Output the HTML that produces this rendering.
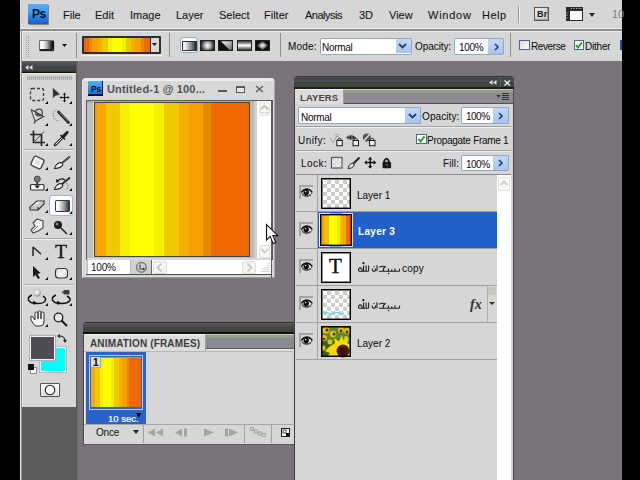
<!DOCTYPE html>
<html><head><meta charset="utf-8">
<style>
*{margin:0;padding:0;box-sizing:border-box}
html,body{width:640px;height:480px;overflow:hidden;background:#7a737b;font-family:"Liberation Sans",sans-serif;position:relative}
.a{position:absolute}
.t{position:absolute;white-space:nowrap;line-height:1}
.mt{position:absolute;top:9px;font-size:11px;color:#161616;white-space:nowrap;line-height:normal;-webkit-text-stroke:0.1px #161616}
.ob{font-size:10px;color:#101010;-webkit-text-stroke:0.05px #101010}
svg{position:absolute;overflow:visible}
</style></head><body>
<!-- ===== black strips ===== -->
<div class="a" style="left:0;top:0;width:20px;height:480px;background:#000"></div>
<div class="a" style="left:622px;top:0;width:18px;height:480px;background:#000"></div>

<!-- ===== menubar ===== -->
<div class="a" style="left:20px;top:0;width:602px;height:28px;background:#d6d6d6"></div>
<div class="a" style="left:20px;top:28px;width:602px;height:1px;background:#eeeeee"></div>
<div class="a" style="left:20px;top:29px;width:602px;height:2px;background:#8a9088"></div>
<!-- Ps logo -->
<div class="a" style="left:28px;top:4px;width:20px;height:20px;background:linear-gradient(180deg,#54b0fa 0,#3c9cf4 45%,#2a86ec 60%,#1e70da 80%,#1a62c8 100%);box-shadow:1px 1px 0 #8a8070"></div>
<div class="t" style="left:32px;top:8px;font-size:12px;font-weight:bold;color:#0a1018;letter-spacing:-0.6px">Ps</div>

<div class="mt" style="left:63px">File</div>
<div class="mt" style="left:95px">Edit</div>
<div class="mt" style="left:130px">Image</div>
<div class="mt" style="left:176px">Layer</div>
<div class="mt" style="left:219px">Select</div>
<div class="mt" style="left:264px">Filter</div>
<div class="mt" style="left:305px;letter-spacing:-0.5px">Analysis</div>
<div class="mt" style="left:359px">3D</div>
<div class="mt" style="left:389px">View</div>
<div class="mt" style="left:428px;letter-spacing:0.75px">Window</div>
<div class="mt" style="left:482px;letter-spacing:0.5px">Help</div>
<div class="a" style="left:518px;top:6px;width:1px;height:17px;background:#9a9a9a"></div>
<div class="a" style="left:519px;top:6px;width:1px;height:17px;background:#f0f0f0"></div>
<!-- Br -->
<div class="a" style="left:534px;top:7px;width:15px;height:14px;background:linear-gradient(135deg,#ececec,#c4c4bc);border:1px solid #585858;box-shadow:inset -1px -1px 0 #a0a0a0"></div>
<div class="t" style="left:537px;top:10px;font-size:9px;font-weight:bold;color:#1a1a1a;letter-spacing:0.2px">Br</div>
<!-- screen mode icon -->
<svg style="left:566px;top:7px" width="18" height="14"><rect x="0" y="0" width="17" height="14" fill="#2a2a2a"/><rect x="4" y="4" width="12" height="9" fill="#fafafa"/><path d="M5 1.5H6M7.5 1.5H8.5M10 1.5H11M12.5 1.5H13.5M14.5 1.5H15.5M1 5.5V6.5M1 8V9M1 10.5V11.5" stroke="#bbb" stroke-width="1"/></svg>
<svg style="left:589px;top:13px" width="7" height="5"><path d="M0 0H6L3 4Z" fill="#202020"/></svg>
<div class="t" style="left:612px;top:9px;font-size:11px;color:#808080">10</div>

<!-- ===== options bar ===== -->
<div class="a" style="left:21px;top:31px;width:601px;height:30px;background:#d6d6d6;border-left:1px solid #8e8e8e"></div>
<div class="a" style="left:22px;top:31px;width:600px;height:1px;background:#eaeaea"></div>
<div class="a" style="left:22px;top:31px;width:1px;height:30px;background:#eaeaea"></div>

<!-- grip -->
<div class="a" style="left:26px;top:35px;width:3px;height:22px;background-image:repeating-linear-gradient(180deg,#d6d6d6 0 1px,transparent 1px 2px),repeating-linear-gradient(90deg,#a4a4a4 0 1px,transparent 1px 2px)"></div>
<!-- gradient tool icon -->
<div class="a" style="left:39px;top:40px;width:15px;height:11px;border-radius:1.5px;background:linear-gradient(90deg,#f4f4f4 0,#fff 25%,#a8a8a8 60%,#1a1a1a 100%);border:1px solid #6a6a6a;border-right:2px solid #111;border-bottom:2px solid #222;box-shadow:1px 1px 0 #b8b8b8"></div>
<svg style="left:62px;top:44px" width="6" height="4"><path d="M0 0H5L2.5 3Z" fill="#101010"/></svg>
<div class="a" style="left:76px;top:33px;width:1px;height:25px;background:#8c9288"></div>
<!-- gradient picker -->
<div class="a" style="left:82px;top:36px;width:79px;height:18px;background:#d8d8d8;border:2px solid #2e2e2e;border-bottom-width:2px;border-radius:1px"></div>
<div class="a" style="left:84px;top:38px;width:66px;height:14px;background:linear-gradient(90deg,#f06800 0 5px,#e88800 5px 8px,#f8a000 8px 14px,#f8b000 14px 18px,#f0c800 18px 24px,#f4f000 24px 28px,#ffff00 28px 38px,#f4f000 38px 42px,#f0c800 42px 47px,#f8b000 47px 51px,#f8a000 51px 57px,#e88800 57px 60px,#f06800 60px)"></div>
<div class="a" style="left:150px;top:38px;width:1px;height:14px;background:#2e2e2e"></div>
<svg style="left:152px;top:43px" width="6" height="4"><path d="M0 0H5L2.5 3Z" fill="#101010"/></svg>
<div class="a" style="left:82px;top:55px;width:80px;height:1px;background:#f4f4f4"></div>
<div class="a" style="left:169px;top:33px;width:1px;height:24px;background:#8c9288"></div>
<!-- gradient type buttons -->
<div class="a" style="left:180px;top:37px;width:18px;height:16px;border:1px solid #8cb0d0;border-radius:3px;background:#fbfbfb"></div>
<div class="a" style="left:182px;top:41px;width:15px;height:10px;background:linear-gradient(90deg,#fff 0,#f0f0f0 20%,#909090 60%,#101010 100%);box-shadow:inset 0 0 0 1px #303030"></div>
<div class="a" style="left:200px;top:40px;width:15px;height:11px;background:radial-gradient(circle at 50% 50%,#fff 0,#c8c8c8 25%,#606060 55%,#101010 80%);box-shadow:inset 0 0 0 1px #202020"></div>
<svg style="left:218px;top:40px" width="15" height="11"><defs><linearGradient id="ag" x1="0" y1="0" x2="1" y2="1"><stop offset="0" stop-color="#fff"/><stop offset="1" stop-color="#707070"/></linearGradient></defs><rect x="0" y="0" width="15" height="11" fill="#141414"/><path d="M3 1.2H13.8V9.8H11.5Z" fill="url(#ag)"/><path d="M1.2 1.2H3L9 9.8H1.2Z" fill="#101010"/><rect x="0.5" y="0.5" width="14" height="10" fill="none" stroke="#202020"/></svg>
<div class="a" style="left:237px;top:40px;width:15px;height:11px;background:linear-gradient(180deg,#101010 0,#808080 25%,#fff 50%,#808080 75%,#101010 100%);box-shadow:inset 0 0 0 1px #202020"></div>
<div class="a" style="left:255px;top:40px;width:15px;height:11px;background:#101010;box-shadow:inset 0 0 0 1px #202020"></div>
<svg style="left:255px;top:40px" width="15" height="11"><defs><radialGradient id="dg"><stop offset="0" stop-color="#fff"/><stop offset="1" stop-color="#303030"/></radialGradient></defs><path d="M7.5 1L13 5.5L7.5 10L2 5.5Z" fill="url(#dg)"/></svg>
<div class="a" style="left:280px;top:33px;width:1px;height:24px;background:#8c9288"></div>
<!-- Mode -->
<div class="t ob" style="left:288px;top:42px;letter-spacing:0.2px">Mode:</div>
<div class="a" style="left:320px;top:38px;width:92px;height:17px;background:#fff;border:1px solid #90a8c8;border-radius:1px"></div>
<div class="t ob" style="left:322px;top:43px;letter-spacing:-0.3px">Normal</div>
<div class="a" style="left:396px;top:39px;width:15px;height:14px;background:linear-gradient(#c4d8f4,#a8c4ec);border-radius:1px"></div>
<svg style="left:398px;top:43px" width="9" height="6"><path d="M1 1L4.5 4.5L8 1" stroke="#243c78" stroke-width="1.8" fill="none"/></svg>
<div class="t ob" style="left:415px;top:42px;letter-spacing:-0.05px">Opacity:</div>
<div class="a" style="left:454px;top:38px;width:50px;height:17px;background:#fff;border:1px solid #90a8c8;border-radius:1px"></div>
<div class="t ob" style="left:459px;top:43px;letter-spacing:-0.3px">100%</div>
<div class="a" style="left:488px;top:39px;width:15px;height:15px;background:linear-gradient(#c4d8f4,#a8c4ec)"></div>
<svg style="left:494px;top:43px" width="5" height="8"><path d="M1 1L4 4L1 7" stroke="#243c78" stroke-width="1.6" fill="none"/></svg>
<div class="a" style="left:510px;top:33px;width:1px;height:24px;background:#8c9288"></div>
<!-- checkboxes -->
<div class="a" style="left:519px;top:40px;width:11px;height:10px;background:linear-gradient(135deg,#d8d8d8,#fff);border:1px solid #4a6890"></div>
<div class="t ob" style="left:531px;top:42px;letter-spacing:-0.4px">Reverse</div>
<div class="a" style="left:574px;top:40px;width:10px;height:10px;background:#fff;border:1px solid #4a6890"></div>
<svg style="left:575px;top:41px" width="8" height="8"><path d="M1 4L3 6.5L7 1.5" stroke="#20a020" stroke-width="2" fill="none"/></svg>
<div class="t ob" style="left:585px;top:42px;letter-spacing:-0.2px">Dither</div>
<div class="a" style="left:620px;top:40px;width:2px;height:10px;background:#2050a0"></div>

<!-- ===== workspace frame pieces ===== -->
<div class="a" style="left:20px;top:31px;width:1px;height:449px;background:#ececec"></div>
<div class="a" style="left:21px;top:61px;width:1px;height:419px;background:#8a8a96"></div>

<!-- ===== toolbox ===== -->
<div class="a" style="left:22px;top:60px;width:54px;height:14px;background:linear-gradient(180deg,#e4e4e4 0 1px,#5a5a5a 1px 3px,#505058 3px 4px,#4a4a58 4px 6px,#40463e 6px 11px,#303430 11px 12px,#101010 12px 13px,#e0e0e0 13px)"></div>
<svg style="left:25px;top:65px" width="8" height="5"><path d="M0 2.5L3.5 0V5Z M4 2.5L7.5 0V5Z" fill="#d8d8d8"/></svg>
<div class="a" style="left:22px;top:73px;width:54px;height:334px;background:#d6d6d6;border-left:1px solid #eaeaea;border-top:1px solid #eaeaea"></div>
<div class="a" style="left:27px;top:76px;width:45px;height:4px;background:repeating-linear-gradient(90deg,#a4a4a4 0 1px,#c8c8c8 1px 2px);opacity:.85"></div>
<div class="a" style="left:22px;top:407px;width:54px;height:73px;background:#5c5c5c"></div>
<div class="a" style="left:76px;top:61px;width:1px;height:419px;background:#5c5c5c"></div>
<div class="a" style="left:77px;top:61px;width:1px;height:419px;background:#6e6a70"></div>
<!-- separators -->
<div class="a" style="left:24px;top:149px;width:50px;height:1px;background:#a8aaa0"></div>
<div class="a" style="left:24px;top:150px;width:50px;height:1px;background:#f0f0f0"></div>
<div class="a" style="left:24px;top:238px;width:50px;height:1px;background:#a8aaa0"></div>
<div class="a" style="left:24px;top:239px;width:50px;height:1px;background:#f0f0f0"></div>
<div class="a" style="left:24px;top:284px;width:50px;height:1px;background:#a8aaa0"></div>
<div class="a" style="left:24px;top:285px;width:50px;height:1px;background:#f0f0f0"></div>
<!-- selected gradient tool bg -->
<div class="a" style="left:49px;top:195px;width:24px;height:21px;background:#fdfdfd;border:1px solid #98b8d8;border-radius:3px"></div>

<svg style="left:0;top:0" width="640" height="480">
<g fill="#111">
<!-- small corner triangles -->
<path d="M45 104H48V101Z"/><path d="M69 104H72V101Z"/>
<path d="M45 126H48V123Z"/><path d="M69 126H72V123Z"/>
<path d="M45 146H48V143Z"/><path d="M69 146H72V143Z"/>
<path d="M45 170H48V167Z"/><path d="M69 170H72V167Z"/>
<path d="M45 191H48V188Z"/><path d="M69 191H72V188Z"/>
<path d="M45 213H48V210Z"/><path d="M69 214H72V211Z"/>
<path d="M45 235H48V232Z"/><path d="M69 235H72V232Z"/>
<path d="M45 260H48V257Z"/><path d="M69 260H72V257Z"/>
<path d="M45 280H48V277Z"/><path d="M69 280H72V277Z"/>
<path d="M45 306H48V303Z"/><path d="M69 306H72V303Z"/>
<path d="M45 327H48V324Z"/>
</g>
<!-- marquee -->
<rect x="30.5" y="88.5" width="13" height="12" fill="none" stroke="#3a3a3a" stroke-width="1.3" stroke-dasharray="3 2" rx="1.5"/>
<!-- move -->
<path d="M53 88L53 98L55.5 95.5L60 94.5Z" fill="#2a2a2a" stroke="#777" stroke-width="0.6"/>
<path d="M60.5 97.5H68.5M64.5 93.5V101.5" stroke="#111" stroke-width="1.2"/>
<path d="M63 94.5L64.5 92.5L66 94.5Z M63 100.5L64.5 102.5L66 100.5Z M61.5 96L59.5 97.5L61.5 99Z M67.5 96L69.5 97.5L67.5 99Z" fill="#111"/>
<!-- lasso -->
<path d="M31 109.5L43.5 116.5L35.5 121" fill="none" stroke="#3a3a3a" stroke-width="1.3"/>
<path d="M31 109.5L35 121" fill="none" stroke="#555" stroke-width="1.1"/>
<circle cx="39" cy="112.5" r="3.4" fill="none" stroke="#444" stroke-width="1.2"/>
<circle cx="38" cy="114" r="1" fill="#222"/>
<path d="M35.5 121L34 123.5" stroke="#333" stroke-width="1.3"/>
<!-- quick selection -->
<path d="M56.5 109.5Q52.5 112 53.5 117Q55 121 58.5 120.5" fill="none" stroke="#666" stroke-width="1" stroke-dasharray="1.2 1.2"/>
<path d="M58.5 112L68.5 122.5" stroke="#1e1e1e" stroke-width="2.6" stroke-linecap="round"/>
<path d="M59.5 112.5L68 121.5" stroke="#aaa" stroke-width="0.7"/>
<!-- crop -->
<path d="M33.5 130.5V142.5H45M30 134.5H41.5V146" fill="none" stroke="#262626" stroke-width="1.7"/>
<path d="M35 141L44 131.5" stroke="#444" stroke-width="1"/>
<!-- eyedropper -->
<path d="M55 145L63 137" stroke="#2a2a2a" stroke-width="2.6" stroke-linecap="round"/>
<path d="M55.5 144.5L62.5 137.5" stroke="#f0f0f0" stroke-width="1"/>
<path d="M61.5 136L64.5 133L67 130.8Q69 130.8 68.5 133L66.5 135.5L63.5 138.5Z" fill="#252525"/>
<path d="M60.5 135L65 139.5" stroke="#1a1a1a" stroke-width="1.6"/>
<!-- healing -->
<rect x="32" y="157.5" width="11" height="10" rx="2" transform="rotate(25 37.5 162.5)" fill="#f8f8f8" stroke="#4a4a4a" stroke-width="1.4"/>
<rect x="35" y="160" width="5" height="5" transform="rotate(25 37.5 162.5)" fill="#e0e0e0"/>
<!-- brush -->
<path d="M70 156.5L61.5 163.5" stroke="#2a2a2a" stroke-width="2"/>
<path d="M70 156.5L61.5 163.5" stroke="#999" stroke-width="0.6"/>
<path d="M54.5 168.5Q55.5 164 60 162.5Q63.5 162.8 62.5 165.5Q59.5 168.8 54.5 168.5Z" fill="#f0f0f0" stroke="#222" stroke-width="1.1"/>
<!-- stamp -->
<circle cx="37.3" cy="179" r="3" fill="#777" stroke="#333" stroke-width="0.8"/>
<path d="M37.3 182V185" stroke="#333" stroke-width="1.8"/>
<rect x="30.5" y="184.5" width="13.5" height="5.5" rx="1" fill="#f4f4f4" stroke="#333" stroke-width="1.2"/>
<path d="M34.5 185.5H40L37.3 188.5Z" fill="#111"/>
<!-- history brush -->
<path d="M70 177.5L61.5 184.5" stroke="#2a2a2a" stroke-width="2"/>
<path d="M54.5 189.5Q55.5 185 60 183.5Q63.5 183.8 62.5 186.5Q59.5 189.8 54.5 189.5Z" fill="#f0f0f0" stroke="#222" stroke-width="1.1"/>
<path d="M58 180.5Q61.5 177.5 65 180" fill="none" stroke="#111" stroke-width="1.3"/>
<path d="M56 179L56.5 183L59.5 181Z" fill="#111"/>
<path d="M66.5 183Q69.5 186 66.5 190" fill="none" stroke="#555" stroke-width="1" stroke-dasharray="1 1"/>
<!-- eraser -->
<path d="M30 207L37 201H44L38 207Z" fill="#f8f8f8" stroke="#333" stroke-width="1.1"/>
<path d="M30 207V210H38L44 204V201M38 207V210" fill="#c8c8c8" stroke="#333" stroke-width="1.1"/>
<!-- gradient icon in toolbox -->
<!-- smudge -->
<path d="M37 219L43 221L43 228L38 231L33 233L31 230L35 226L33 223Z" fill="#f0f0f0" stroke="#444" stroke-width="1.1"/>
<path d="M32 232L38 226" stroke="#777" stroke-width="1"/>
<!-- burn/sponge -->
<circle cx="58" cy="225" r="4" fill="#1a1a1a"/>
<circle cx="57" cy="224" r="1.5" fill="#888"/>
<path d="M61 228L67 234" stroke="#222" stroke-width="1.5"/>
<!-- pen -->
<path d="M33 247V256M33 247L41 254" fill="none" stroke="#222" stroke-width="1.5"/>
<!-- path selection -->
<path d="M33 266V277L35.5 275L38 279L40 278L37.5 274L40.5 273Z" fill="#1a1a1a"/>
<!-- shape -->
<rect x="55.5" y="268.5" width="12" height="9.5" rx="3" fill="#e8e8e8" stroke="#333" stroke-width="1.1"/>
<path d="M58 276L66 270" stroke="#fff" stroke-width="1.5"/>
<!-- 3D rotate -->
<defs><radialGradient id="sph" cx="40%" cy="35%" r="65%"><stop offset="0" stop-color="#fff"/><stop offset=".6" stop-color="#d8d8d8"/><stop offset="1" stop-color="#888"/></radialGradient></defs>
<path d="M32 295Q27.5 297 28.5 300Q30 303.5 37 303.5Q45 303.5 45.5 300Q46 298 43 296" fill="none" stroke="#111" stroke-width="1.5"/>
<circle cx="37.3" cy="293" r="3.4" fill="url(#sph)" stroke="#aaa" stroke-width="0.5"/>
<path d="M33 300.5L37.5 303.5L33.5 304.8Z" fill="#111"/>
<!-- 3D orbit -->
<path d="M56 295Q51.5 297 52.5 300Q54 303.5 61 303.5Q69 303.5 70 300Q70.5 298 67 296" fill="none" stroke="#111" stroke-width="1.5"/>
<path d="M57 300.5L61.5 303.5L57.5 304.8Z" fill="#111"/>
<rect x="63.5" y="290" width="6" height="4.5" rx="1" fill="#3a3a3a"/>
<rect x="62" y="291" width="2" height="2.5" fill="#666"/>
<!-- hand -->
<path d="M31 318Q30 316 32 316L35 320V313Q35 312 36.5 312Q38 312 38 313V319V312Q38 311 39.5 311Q41 311 41 312V319V313Q41 312 42.5 312Q44 312 44 313V322Q44 326 40 326H36Q34 326 31 320Z" fill="#f4f4f4" stroke="#333" stroke-width="1"/>
<!-- zoom -->
<circle cx="58.5" cy="317.5" r="4.3" fill="#e8e8e8" stroke="#1a1a1a" stroke-width="1.3"/>
<path d="M61.5 320.5L67 326" stroke="#111" stroke-width="2"/>
<!-- swap arrows -->
<path d="M59 336Q65 336 65 341" fill="none" stroke="#222" stroke-width="1.2"/>
<path d="M57 336L60 334V338Z M65 343L63 340H67Z" fill="#222"/>
<!-- default colors -->
<rect x="30.5" y="367.5" width="6" height="6" fill="#fff" stroke="#888" stroke-width="1"/>
<rect x="28" y="364" width="6" height="6" fill="#111"/>
</svg>
<div class="t" style="left:55px;top:242px;font-family:'Liberation Serif',serif;font-size:19.5px;color:#111;-webkit-text-stroke:0.3px #111">T</div>
<!-- gradient icon selected -->
<div class="a" style="left:55px;top:200px;width:15px;height:12px;border-radius:2px;background:linear-gradient(90deg,#fafafa 0,#fff 20%,#a0a0a0 60%,#1a1a1a 100%);box-shadow:inset 0 0 0 1px #3a3a3a"></div>
<!-- colors -->
<div class="a" style="left:40px;top:347px;width:26px;height:25px;background:#00ffff;border:1px solid #f4f4f4;box-shadow:0 0 0 1px #b8b8b8"></div>
<div class="a" style="left:30px;top:336px;width:25px;height:24px;background:#4c4c54;border:1px solid #f4f4f4;box-shadow:0 0 0 1px #b0b0b0"></div>
<div class="a" style="left:40px;top:383px;width:20px;height:14px;background:linear-gradient(#fdfdfd,#e0e0e0);border:1px solid #555;border-radius:1px"></div>
<svg style="left:44px;top:384px" width="12" height="12"><circle cx="6" cy="6" r="4.8" fill="#fff" stroke="#222" stroke-width="1.1"/></svg>

<!-- ===== document window ===== -->
<div class="a" style="left:82px;top:78px;width:193px;height:200px;background:#d8d8d8;border:1px solid #e8e8e8;border-right-color:#a8a8a8;border-bottom-color:#9a9a9a;border-radius:4px 4px 0 0"></div>
<div class="a" style="left:83px;top:79px;width:191px;height:2px;background:#ececec;border-radius:3px 3px 0 0"></div>
<!-- doc Ps icon -->
<div class="a" style="left:88px;top:81px;width:15px;height:15px;background:linear-gradient(180deg,#54b0fa 0,#3494f0 50%,#1e6ed8 100%);border-bottom:2px solid #101820;border-right:1px solid #101820"></div>
<div class="t" style="left:91px;top:85px;font-size:8.5px;font-weight:bold;color:#0a1420;letter-spacing:-0.2px">Ps</div>
<div class="t" style="left:107px;top:84px;font-size:11px;font-weight:bold;color:#505050;letter-spacing:0.17px">Untitled-1 @ 100...</div>
<div class="a" style="left:218px;top:90px;width:9px;height:2px;background:#5a5a5a"></div>
<div class="a" style="left:236px;top:86px;width:9px;height:7px;border:1px solid #5a5a5a;border-top-width:2px;background:#e4e4e4"></div>
<svg style="left:255px;top:85px" width="9" height="8"><path d="M1 1L8 7M8 1L1 7" stroke="#5a5a5a" stroke-width="1.25"/></svg>
<!-- canvas frame -->
<div class="a" style="left:86px;top:100px;width:187px;height:160px;background:#c0c0c0;border:1px solid #585c5c"></div>
<div class="a" style="left:87px;top:101px;width:163px;height:2px;background:#a8b0a8"></div>
<div class="a" style="left:93px;top:101px;width:1px;height:157px;background:#e0e0e0"></div>
<div class="a" style="left:94px;top:102px;width:156px;height:155px;border:1px solid #404848"></div>
<div class="a" style="left:95px;top:103px;width:154px;height:153px;background:linear-gradient(90deg,#f8a800 0 11.5px,#f0c800 11.5px 25px,#f4f000 25px 35px,#ffff00 35px 59px,#f4f000 59px 69.5px,#f0c800 69.5px 84px,#f8b000 84px 94.5px,#f8a000 94.5px 108.5px,#e88800 108.5px 116px,#f06800 116px)"></div>
<div class="a" style="left:95px;top:103px;width:2px;height:153px;background:#f09000;opacity:.6"></div>
<div class="a" style="left:250px;top:101px;width:7px;height:157px;background:linear-gradient(90deg,#b8b8b8 0 4px,#d0d0c8 4px)"></div>
<!-- vertical scrollbar -->
<div class="a" style="left:257px;top:101px;width:14px;height:157px;background:#fff"></div>
<div class="a" style="left:271px;top:100px;width:1px;height:178px;background:#585c5c"></div>
<svg style="left:259px;top:102px" width="11" height="15"><rect x="0.5" y="0.5" width="10" height="13" rx="1.5" fill="#f6f6f6" stroke="#e4e4dc"/><path d="M1.8 7.5L5.5 3.8L9.2 7.5" stroke="#c4c4bc" stroke-width="1.8" fill="none"/><path d="M1.5 9.5V10.5Q5.5 12 9.5 10.5V9.5" stroke="#c8c8c0" stroke-width="1" fill="none"/></svg>
<svg style="left:259px;top:245px" width="11" height="13"><rect x="0.5" y="0.5" width="10" height="12" rx="1.5" fill="#f8f8f8" stroke="#e0e0d8"/><path d="M2 4L5.5 7.5L9 4" stroke="#c8c8c0" stroke-width="1.6" fill="none"/></svg>
<!-- status bar -->
<div class="a" style="left:87px;top:258px;width:184px;height:2px;background:#d8d8d8"></div>
<div class="a" style="left:87px;top:260px;width:184px;height:14px;background:#fff"></div>
<div class="a" style="left:86px;top:274px;width:186px;height:1px;background:#484848"></div>
<div class="a" style="left:87px;top:260px;width:1px;height:14px;background:#a8bcd8"></div>
<div class="a" style="left:130px;top:260px;width:1px;height:14px;background:#a8bcd8"></div>
<div class="t" style="left:91px;top:263px;font-size:10px;color:#111;letter-spacing:-0.2px">100%</div>
<div class="a" style="left:131px;top:260px;width:21px;height:14px;background:#d2d2d2;border-right:1px solid #6a6a6a"></div>
<svg style="left:135px;top:261px" width="13" height="13"><circle cx="6.4" cy="6.4" r="4.8" fill="none" stroke="#7a7a7a" stroke-width="1.5"/><path d="M5 3.5V8H9.5" stroke="#6a6a6a" stroke-width="1.5" fill="none"/><path d="M8 6.2L10 8L8 9.8Z" fill="#444"/></svg>
<svg style="left:153px;top:261px" width="14" height="13"><rect x="0.5" y="0.5" width="13" height="12" rx="1.5" fill="#f4f4f4" stroke="#e0e0d8"/><path d="M8.5 2.5L4.5 6.5L8.5 10.5" stroke="#c4c4bc" stroke-width="1.7" fill="none"/></svg>
<svg style="left:242px;top:261px" width="14" height="13"><rect x="0.5" y="0.5" width="13" height="12" rx="1.5" fill="#f4f4f4" stroke="#e0e0d8"/><path d="M5.5 2.5L9.5 6.5L5.5 10.5" stroke="#c4c4bc" stroke-width="1.7" fill="none"/></svg>
<svg style="left:258px;top:260px" width="13" height="14"><path d="M11 3L11 4M9 5L9 6M11 5L11 6M7 7V8M9 7V8M11 7V8M5 9V10M7 9V10M9 9V10M11 9V10M3 11V12M5 11V12M7 11V12M9 11V12M11 11V12" stroke="#b0b0a8" stroke-width="1"/></svg>

<!-- ===== animation panel ===== -->
<div class="a" style="left:83px;top:322px;width:211px;height:12px;background:linear-gradient(180deg,#2a2a2a 0 1px,#606060 1px 2px,#4a4c56 2px 5px,#40463e 5px 10px,#101210 10px 12px);border-radius:4px 0 0 0"></div>
<div class="a" style="left:83px;top:334px;width:211px;height:111px;background:#d6d6d6;border-left:1px solid #454545;box-shadow:inset 1px 0 0 #e4e4e4"></div>
<div class="a" style="left:206px;top:334px;width:88px;height:16px;background:linear-gradient(180deg,#c8c8c0 0 1px,#949c88 1px 4px,#8a8a94 4px 14px,#5a5a5a 14px 15px,#e8e8e8 15px)"></div>
<div class="a" style="left:84px;top:334px;width:122px;height:17px;background:#dcdcdc;border-top:1px solid #f4f4f4;border-right:1px solid #a0a0a0"></div>
<div class="t" style="left:90px;top:339px;font-size:10px;font-weight:bold;color:#3c3c3c;letter-spacing:0.15px">ANIMATION (FRAMES)</div>
<div class="a" style="left:84px;top:351px;width:209px;height:1px;background:#b8b8b8"></div>
<!-- frame -->
<div class="a" style="left:86px;top:352px;width:60px;height:72px;background:#2a62c8"></div>
<div class="a" style="left:89px;top:355px;width:54px;height:55px;border:1px solid #b8d0f4"></div>
<div class="a" style="left:91px;top:358px;width:50px;height:49px;box-shadow:0 -1px 0 #a09098;background:linear-gradient(90deg,#f8a800 0 4px,#f0c800 4px 9px,#f4f000 9px 12px,#ffff00 12px 20px,#f4f000 20px 23px,#f0c800 23px 28px,#f8b000 28px 31px,#f8a000 31px 36px,#e88800 36px 38px,#f06800 38px)"></div>
<div class="a" style="left:91px;top:357px;width:10px;height:11px;background:#dcdcdc;border-right:1px solid #a0a8b8;border-bottom:1px solid #a0a8b8"></div>
<div class="t" style="left:93px;top:358px;font-size:10px;font-weight:bold;color:#000">1</div>
<div class="t" style="left:108px;top:414px;font-size:9.5px;color:#fff;letter-spacing:0px;-webkit-text-stroke:0.2px #fff">10 sec.</div>
<svg style="left:136px;top:413px" width="6" height="5"><path d="M0 0H5.5L2.75 4.5Z" fill="#000"/></svg>
<!-- bottom bar -->
<div class="a" style="left:84px;top:424px;width:209px;height:1px;background:#a8a8a8"></div>
<div class="t" style="left:96px;top:428px;font-size:10px;color:#111;letter-spacing:-0.2px">Once</div>
<svg style="left:133px;top:430px" width="6" height="5"><path d="M0 0H6L3 4Z" fill="#222"/></svg>
<div class="a" style="left:143px;top:425px;width:1px;height:18px;background:#a0a0a0"></div>
<div class="a" style="left:244px;top:425px;width:1px;height:18px;background:#a0a0a0"></div>
<div class="a" style="left:271px;top:425px;width:1px;height:18px;background:#a0a0a0"></div>
<svg style="left:0;top:0" width="640" height="480">
<g fill="#a4a4a4">
<path d="M148 432.5L155 428.5V436.5Z M156 432.5L163 428.5V436.5Z"/>
<path d="M175 432.5L182 428.5V436.5Z M184 428.5H187V436.5H184Z"/>
<path d="M204 428.5L214 432.5L204 436.5Z"/>
<path d="M225 428.5H228V436.5H225Z M229 428.5L238 432.5L229 436.5Z"/>
</g>
<g fill="none" stroke="#a8a8a8" stroke-width="1.2"><circle cx="252" cy="429" r="1.7"/><circle cx="256" cy="431.5" r="1.7"/><circle cx="260" cy="433.5" r="1.7"/><circle cx="264" cy="435" r="1.7"/></g>
<rect x="281.5" y="428.5" width="8" height="8" fill="#fff" stroke="#222" stroke-width="1"/>
<rect x="283" y="430" width="3" height="3" fill="#fff" stroke="#222" stroke-width="0.8"/>
<path d="M286 433H289V436H286Z" fill="#111"/>
</svg>
<div class="a" style="left:83px;top:444px;width:211px;height:1px;background:#5a5a5a"></div>

<!-- ===== layers panel ===== -->
<div class="a" style="left:294px;top:76px;width:220px;height:13px;background:linear-gradient(180deg,#2e2e2e 0 1px,#5a5c5a 1px 2px,#383a38 2px 3px,#4a4c54 3px 6px,#40463e 6px 11px,#1c1e1a 11px 13px);border-radius:4px 4px 0 0"></div>
<svg style="left:489px;top:80px" width="8" height="5"><path d="M0 2.5L3.5 0V5Z M4 2.5L7.5 0V5Z" fill="#e0e0e0"/></svg>
<div class="a" style="left:500px;top:78px;width:1px;height:9px;background:#5a5e5a"></div>
<svg style="left:504px;top:80px" width="7" height="6"><path d="M0.5 0.5L6 5.5M6 0.5L0.5 5.5" stroke="#e8e8e8" stroke-width="1.5"/></svg>
<div class="a" style="left:294px;top:89px;width:220px;height:391px;background:#d6d6d6;border-left:1px solid #3a3c3a;border-right:1px solid #4a4a4a"></div>
<div class="a" style="left:344px;top:89px;width:169px;height:15px;background:linear-gradient(180deg,#c8c8c0 0 1px,#949c88 1px 4px,#8a8a94 4px 14px,#505050 14px 15px)"></div>
<div class="a" style="left:295px;top:89px;width:49px;height:15px;background:#dcdcdc;border-top:1px solid #f4f4f4;border-right:1px solid #a0a0a0"></div>
<div class="t" style="left:300px;top:93px;font-size:9.5px;font-weight:bold;color:#474747;letter-spacing:0.1px">LAYERS</div>
<svg style="left:496px;top:93px" width="14" height="8"><path d="M0.5 2H4.5L2.5 4.5Z" fill="#202020"/><path d="M6 0.5H13M6 2.5H13M6 4.5H13M6 6.5H13" stroke="#303030" stroke-width="1"/></svg>
<!-- blend mode -->
<div class="a" style="left:298px;top:107px;width:123px;height:17px;background:#fff;border:1px solid #90a8c8;border-radius:1px"></div>
<div class="t ob" style="left:301px;top:113px;letter-spacing:-0.3px">Normal</div>
<div class="a" style="left:405px;top:108px;width:15px;height:15px;background:linear-gradient(#c4d8f4,#a8c4ec)"></div>
<svg style="left:408px;top:113px" width="9" height="6"><path d="M1 1L4.5 4.5L8 1" stroke="#243c78" stroke-width="1.8" fill="none"/></svg>
<div class="t ob" style="left:422px;top:112px;letter-spacing:0.1px">Opacity:</div>
<div class="a" style="left:461px;top:107px;width:48px;height:17px;background:#fff;border:1px solid #90a8c8;border-radius:1px"></div>
<div class="t ob" style="left:466px;top:112px;letter-spacing:-0.5px">100%</div>
<div class="a" style="left:493px;top:108px;width:15px;height:15px;background:linear-gradient(#c4d8f4,#a8c4ec)"></div>
<svg style="left:498px;top:112px" width="5" height="8"><path d="M1 1L4 4L1 7" stroke="#243c78" stroke-width="1.6" fill="none"/></svg>
<div class="a" style="left:296px;top:126px;width:215px;height:1px;background:#a0a0a0"></div>
<div class="a" style="left:296px;top:127px;width:215px;height:1px;background:#f0f0f0"></div>
<!-- unify -->
<div class="t ob" style="left:298px;top:136px;letter-spacing:0.45px">Unify:</div>
<svg style="left:0;top:0" width="640" height="480">
<!-- unify icons -->
<path d="M330.5 138L333 143L336.5 136.5" stroke="#888" stroke-width="1" fill="none" stroke-dasharray="1.2 0.8"/>
<circle cx="337" cy="135.5" r="1.3" fill="none" stroke="#999" stroke-width="0.8"/>
<path d="M346 137.5Q351 132.5 356 137.5Q351 142 346 137.5Z" fill="#3a3a3a"/><circle cx="350.5" cy="137.3" r="1.6" fill="#111" stroke="#bbb" stroke-width="0.6"/>
<circle cx="366.8" cy="137.5" r="4" fill="#555"/><path d="M364 140.5L369.5 134.5" stroke="#eee" stroke-width="1.2"/>
<g stroke="#1a1a1a" stroke-width="1" fill="#f4f4f4">
<path d="M337.8 140.5V139.3Q339.5 136.8 341.2 139.3V140.5" fill="none"/><rect x="336.8" y="140.5" width="5.5" height="5.2"/>
<path d="M354 140.5V139.3Q355.7 136.8 357.4 139.3V140.5" fill="none"/><rect x="353" y="140.5" width="5.5" height="5.2"/>
<path d="M370.5 140.5V139.3Q372.2 136.8 373.9 139.3V140.5" fill="none"/><rect x="369.5" y="140.5" width="5.5" height="5.2"/>
</g>
<!-- lock icons -->
<rect x="331.5" y="157.5" width="10.5" height="10.5" fill="#f0f0f0" stroke="#555" stroke-width="1.2"/>
<path d="M333 159H335V161H333ZM337 159H339V161H337ZM335 161H337V163H335ZM333 163H335V165H333ZM337 163H339V165H337ZM339 161H340.5V163H339ZM339 165H340.5V166.5H339ZM335 165H337V166.5H335Z" fill="#d0d0d0"/>
<path d="M359.5 157.5L353 164" stroke="#2a2a2a" stroke-width="2.2"/>
<path d="M348 168.5Q348.5 164.5 352 163Q355 163.5 354 166Q351.5 168.8 348 168.5Z" fill="#e8e8e8" stroke="#2a2a2a" stroke-width="1"/>
<path d="M365 162.5H375.5M370.2 157.5V168" stroke="#111" stroke-width="1.4"/>
<path d="M368 159.5L370.2 157L372.4 159.5Z M368 166L370.2 168.5L372.4 166Z M366.8 160.3L364.3 162.5L366.8 164.7Z M373.6 160.3L376.1 162.5L373.6 164.7Z" fill="#111"/>
<path d="M384.2 162.5V161Q386.5 156.2 388.8 161V162.5" stroke="#1a1a1a" stroke-width="1.8" fill="none"/>
<rect x="382.5" y="161.8" width="8.6" height="6.4" rx="1.2" fill="#1a1a1a"/>
<circle cx="386.8" cy="164.8" r="0.9" fill="#666"/>
</svg>
<div class="a" style="left:416px;top:134px;width:11px;height:10px;background:#fff;border:1px solid #4a6890"></div>
<svg style="left:417px;top:135px" width="9" height="8"><path d="M1.5 4L3.5 6.5L7.5 1.5" stroke="#20a020" stroke-width="2" fill="none"/></svg>
<div class="t ob" style="left:427px;top:136px;letter-spacing:-0.28px">Propagate Frame 1</div>
<div class="a" style="left:296px;top:150px;width:215px;height:1px;background:#a0a0a0"></div>
<div class="a" style="left:296px;top:151px;width:215px;height:1px;background:#f0f0f0"></div>
<div class="t ob" style="left:301px;top:159px;letter-spacing:0.5px">Lock:</div>
<div class="t ob" style="left:443px;top:159px;letter-spacing:0.1px">Fill:</div>
<div class="a" style="left:461px;top:155px;width:48px;height:16px;background:#fff;border:1px solid #90a8c8;border-radius:1px"></div>
<div class="t ob" style="left:466px;top:160px;letter-spacing:-0.5px">100%</div>
<div class="a" style="left:493px;top:156px;width:15px;height:14px;background:linear-gradient(#c4d8f4,#a8c4ec)"></div>
<svg style="left:498px;top:159px" width="5" height="8"><path d="M1 1L4 4L1 7" stroke="#243c78" stroke-width="1.6" fill="none"/></svg>
<!-- layer list -->
<div class="a" style="left:296px;top:174px;width:215px;height:1px;background:#8a8a8a"></div>
<div class="a" style="left:497px;top:175px;width:14px;height:305px;background:#fff"></div>
<svg style="left:498px;top:177px" width="12" height="14"><rect x="0.5" y="0.5" width="11" height="13" rx="1.5" fill="#f8f8f8" stroke="#e0e0d8"/><path d="M2.5 8L6 4.5L9.5 8" stroke="#c8c8c0" stroke-width="1.6" fill="none"/></svg>
<div class="a" style="left:317px;top:175px;width:1px;height:185px;background:#a0a0a0"></div>
<!-- row separators -->
<div class="a" style="left:296px;top:211px;width:201px;height:1px;background:#a0a0a0"></div>
<div class="a" style="left:296px;top:248px;width:201px;height:1px;background:#a0a0a0"></div>
<div class="a" style="left:296px;top:285px;width:201px;height:1px;background:#a0a0a0"></div>
<div class="a" style="left:296px;top:322px;width:201px;height:1px;background:#a0a6a0"></div>
<div class="a" style="left:296px;top:359px;width:201px;height:1px;background:#a0a6a0"></div>
<!-- selected row -->
<div class="a" style="left:318px;top:212px;width:179px;height:36px;background:#2060c8"></div>
<!-- eyes -->
<div class="a" style="left:299px;top:185px;width:14px;height:14px;border-left:2px solid #a4a4a4;border-top:2px solid #a4a4a4"></div>
<svg style="left:299px;top:185px" width="16" height="16"><ellipse cx="7.8" cy="7.3" rx="5.2" ry="3.4" fill="#e4e4e4" stroke="#2a2a2a" stroke-width="1"/><path d="M2.6 7Q7.5 1.6 13 7" stroke="#151515" stroke-width="1.5" fill="none"/><circle cx="7.2" cy="7.4" r="2.7" fill="#0c0c0c"/><circle cx="6.6" cy="6.6" r="0.8" fill="#e0e0e0"/><path d="M3.5 10.4Q7.5 13 12 10.2" stroke="#555" stroke-width="1" fill="none"/></svg>
<div class="a" style="left:299px;top:222px;width:14px;height:14px;border-left:2px solid #a4a4a4;border-top:2px solid #a4a4a4"></div>
<svg style="left:299px;top:222px" width="16" height="16"><ellipse cx="7.8" cy="7.3" rx="5.2" ry="3.4" fill="#e4e4e4" stroke="#2a2a2a" stroke-width="1"/><path d="M2.6 7Q7.5 1.6 13 7" stroke="#151515" stroke-width="1.5" fill="none"/><circle cx="7.2" cy="7.4" r="2.7" fill="#0c0c0c"/><circle cx="6.6" cy="6.6" r="0.8" fill="#e0e0e0"/><path d="M3.5 10.4Q7.5 13 12 10.2" stroke="#555" stroke-width="1" fill="none"/></svg>
<div class="a" style="left:299px;top:259px;width:14px;height:14px;border-left:2px solid #a4a4a4;border-top:2px solid #a4a4a4"></div>
<svg style="left:299px;top:259px" width="16" height="16"><ellipse cx="7.8" cy="7.3" rx="5.2" ry="3.4" fill="#e4e4e4" stroke="#2a2a2a" stroke-width="1"/><path d="M2.6 7Q7.5 1.6 13 7" stroke="#151515" stroke-width="1.5" fill="none"/><circle cx="7.2" cy="7.4" r="2.7" fill="#0c0c0c"/><circle cx="6.6" cy="6.6" r="0.8" fill="#e0e0e0"/><path d="M3.5 10.4Q7.5 13 12 10.2" stroke="#555" stroke-width="1" fill="none"/></svg>
<div class="a" style="left:299px;top:296px;width:14px;height:14px;border-left:2px solid #a4a4a4;border-top:2px solid #a4a4a4"></div>
<svg style="left:299px;top:296px" width="16" height="16"><ellipse cx="7.8" cy="7.3" rx="5.2" ry="3.4" fill="#e4e4e4" stroke="#2a2a2a" stroke-width="1"/><path d="M2.6 7Q7.5 1.6 13 7" stroke="#151515" stroke-width="1.5" fill="none"/><circle cx="7.2" cy="7.4" r="2.7" fill="#0c0c0c"/><circle cx="6.6" cy="6.6" r="0.8" fill="#e0e0e0"/><path d="M3.5 10.4Q7.5 13 12 10.2" stroke="#555" stroke-width="1" fill="none"/></svg>
<div class="a" style="left:299px;top:333px;width:14px;height:14px;border-left:2px solid #a4a4a4;border-top:2px solid #a4a4a4"></div>
<svg style="left:299px;top:333px" width="16" height="16"><ellipse cx="7.8" cy="7.3" rx="5.2" ry="3.4" fill="#e4e4e4" stroke="#2a2a2a" stroke-width="1"/><path d="M2.6 7Q7.5 1.6 13 7" stroke="#151515" stroke-width="1.5" fill="none"/><circle cx="7.2" cy="7.4" r="2.7" fill="#0c0c0c"/><circle cx="6.6" cy="6.6" r="0.8" fill="#e0e0e0"/><path d="M3.5 10.4Q7.5 13 12 10.2" stroke="#555" stroke-width="1" fill="none"/></svg>

<!-- thumbnails -->
<div class="a" style="left:321px;top:178px;width:30px;height:31px;border:1px solid #000;box-shadow:inset 0 0 0 1px rgba(0,0,0,.45);background-color:#fff;background-image:linear-gradient(45deg,#cdcdc8 25%,transparent 25%,transparent 75%,#cdcdc8 75%),linear-gradient(45deg,#cdcdc8 25%,transparent 25%,transparent 75%,#cdcdc8 75%);background-size:8px 8px;background-position:1px 1px,5px 5px"></div>
<div class="a" style="left:319px;top:213px;width:34px;height:34px;border:1px solid #e8ecf4;border-color:#f0f0f0 #d8d8d8 #d8d8d8 #f0f0f0"></div>
<div class="a" style="left:330px;top:213px;width:12px;height:1px;background:#6aa8f8"></div>
<div class="a" style="left:330px;top:246px;width:12px;height:1px;background:#6aa8f8"></div>
<div class="a" style="left:320px;top:214px;width:32px;height:32px;border:1px solid #000;box-shadow:inset 0 0 0 1px rgba(0,0,0,.4);background:linear-gradient(90deg,#f8a000 0 3px,#f0c000 3px 8px,#ffff00 8px 16px,#f4e800 16px 19px,#f0c000 19px 21px,#f8a800 21px 25px,#f06800 25px)"></div>
<div class="a" style="left:321px;top:252px;width:30px;height:31px;border:1px solid #000;box-shadow:inset 0 0 0 1px rgba(0,0,0,.45);background:#fff"></div>
<div class="t" style="left:329px;top:256px;font-family:'Liberation Serif',serif;font-size:21px;color:#111;-webkit-text-stroke:0.4px #111">T</div>
<div class="a" style="left:321px;top:289px;width:30px;height:31px;border:1px solid #000;box-shadow:inset 0 0 0 1px rgba(0,0,0,.45);background-color:#fff;background-image:linear-gradient(45deg,#cdcdc8 25%,transparent 25%,transparent 75%,#cdcdc8 75%),linear-gradient(45deg,#cdcdc8 25%,transparent 25%,transparent 75%,#cdcdc8 75%);background-size:8px 8px;background-position:1px 1px,5px 5px"></div>
<svg style="left:323px;top:310px" width="22" height="6"><path d="M1 3.5Q4 1.5 6 3.5T11 3.5T16 3.5T21 3" stroke="#50d0f0" stroke-width="1.4" fill="none" opacity=".85"/></svg>
<!-- sunflower -->
<svg style="left:321px;top:326px" width="30" height="31">
<rect x="0" y="0" width="30" height="31" fill="#5a8a30"/>
<path d="M0 12Q8 18 14 14T30 20V31H0Z" fill="#3a6420"/>
<g fill="#f0c000"><circle cx="5" cy="4" r="3.5"/><circle cx="12" cy="8" r="3.2"/><circle cx="20" cy="4" r="3"/><circle cx="26" cy="5" r="3"/><circle cx="3" cy="12" r="3"/><circle cx="9" cy="16" r="2.5"/><circle cx="2" cy="22" r="2.5"/><circle cx="25" cy="12" r="2"/></g>
<g fill="#502008"><circle cx="6" cy="4" r="1.6"/><circle cx="13" cy="8" r="1.5"/><circle cx="20" cy="5" r="1.4"/><circle cx="26" cy="6" r="1.4"/><circle cx="3" cy="13" r="1.3"/></g>
<path d="M8 21L14 17L13 12L18 15L21 9L22 14L28 12L26 17L30 19V31H6L9 27L4 25Z" fill="#f8d800"/>
<circle cx="21" cy="24" r="7.5" fill="#ffe000"/>
<circle cx="22" cy="25" r="6.5" fill="#4a1806"/>
<circle cx="22" cy="25" r="3" fill="#381004"/>
<rect x="0.75" y="0.75" width="28.5" height="29.5" fill="none" stroke="#000" stroke-width="1.5"/>
</svg>
<!-- layer names -->
<div class="t ob" style="left:357px;top:191px;letter-spacing:0px">Layer 1</div>
<div class="t" style="left:358px;top:227px;font-size:10px;font-weight:bold;color:#fff;letter-spacing:0.3px">Layer 3</div>
<div class="t ob" style="left:357px;top:339px;letter-spacing:0px">Layer 2</div>
<div class="t ob" style="left:402px;top:264px;letter-spacing:0.2px">copy</div>
<!-- arabic text approximations -->
<svg style="left:0;top:0" width="640" height="480">
<defs><g id="ar">
<g stroke="#1c1c1c" stroke-width="1.1" fill="none" stroke-linecap="butt">
<path d="M358.6 271Q358.2 267.6 360.6 267.9Q362.6 268.6 362.2 271.2"/>
<path d="M358.6 271.3H368.6M363.6 265.4V271.3M366.1 265.4V271.3M368.6 265.4V271.3"/>
<path d="M372.2 268.6Q372.2 271.4 374.2 271.3Q375.6 271.3 375.6 268.4"/>
<path d="M377 265.2V271.3"/>
<path d="M379 271.3H399.4M379.2 267.2Q382 265.6 385.2 266.8Q382.4 268.6 383.4 271.3M388.4 271.3V268.6M391.8 271.3V269.2M395 271.3V268.6M398.4 271.3Q399.8 271.4 399.6 268.6"/>
</g>
<circle cx="363.4" cy="263.2" r="1.1" fill="#141414"/>
<circle cx="374" cy="266.6" r="0.7" fill="#141414"/>
<circle cx="388.6" cy="273.4" r="0.75" fill="#141414"/>
</g></defs>
<use href="#ar"/>
<use href="#ar" transform="translate(0,37)"/>
</svg>
<div class="t" style="left:470px;top:298px;font-family:'Liberation Serif',serif;font-style:italic;font-weight:bold;font-size:14px;color:#333">fx</div>
<div class="a" style="left:487px;top:286px;width:1px;height:36px;background:#b0b0a8"></div>
<div class="a" style="left:488px;top:287px;width:8px;height:8px;background:#c8c8c0"></div>
<svg style="left:489px;top:302px" width="7" height="4"><path d="M0 0H6L3 3Z" fill="#333"/></svg>

<!-- cursor -->
<svg style="left:0;top:0" width="640" height="480"><path d="M266.5 224.5V240L270.2 236.4L273.2 243.6L275.8 242.5L272.9 235.6H277.8Z" fill="#fff" stroke="#111" stroke-width="1.1" stroke-linejoin="miter"/></svg>
</body></html>
